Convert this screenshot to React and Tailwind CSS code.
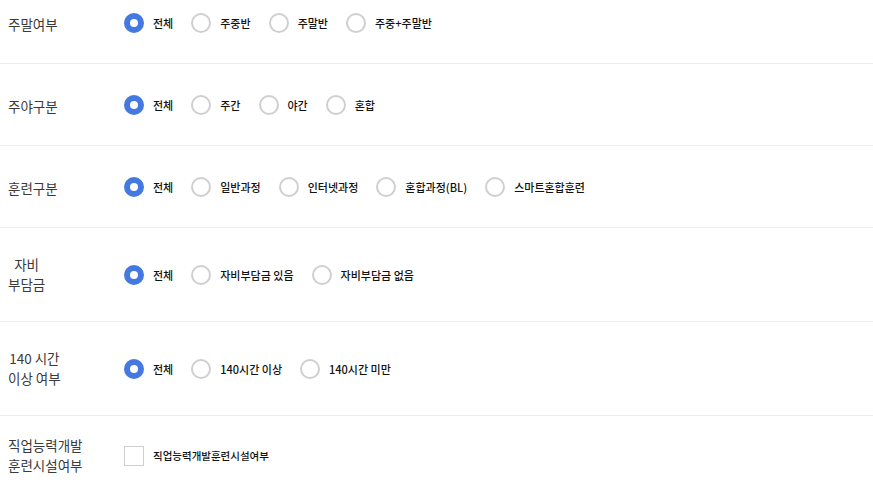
import React, { useState } from 'react';

const FONT = "font-['Noto_Sans_CJK_KR','Noto_Sans',sans-serif]";

const rows = [
    { key: 'weekend', label: ['주말여부'], options: ['전체', '주중반', '주말반', '주중+주말반'], first: true },
    { key: 'dayNight', label: ['주야구분'], options: ['전체', '주간', '야간', '혼합'] },
    { key: 'training', label: ['훈련구분'], options: ['전체', '일반과정', '인터넷과정', '혼합과정(BL)', '스마트혼합훈련'] },
    { key: 'selfPay', label: ['자비', '부담금'], options: ['전체', '자비부담금 있음', '자비부담금 없음'] },
    { key: 'hours', label: ['140 시간', '이상 여부'], options: ['전체', '140시간 이상', '140시간 미만'] },
];

const Radio = ({ checked, label, onClick }) => (
    <label className="flex items-center gap-[9px] cursor-pointer" onClick={onClick}>
        <span
            className={
                checked
                    ? 'w-5 h-5 rounded-full border-[6px] border-[#4479e1] bg-white shrink-0'
                    : 'w-5 h-5 rounded-full border-2 border-[#cfcfcf] bg-white shrink-0'
            }
        />
        <span className="text-[11px] leading-5 font-medium text-[#111] whitespace-nowrap">{label}</span>
    </label>
);

const RowLabel = ({ lines }) => (
    <div className="w-[124px] pl-2 shrink-0">
        <div className="inline-block text-center text-[13.5px] leading-[20px] text-[#3a3a3a]">
            {lines.map((l) => (
                <div key={l}>{l}</div>
            ))}
        </div>
    </div>
);

export default function App() {
    // 각 그룹의 선택값 (기본: 전체)
    const [sel, setSel] = useState({});
    const [facility, setFacility] = useState(false);

    return (
        <div className={`w-[873px] h-[489px] overflow-hidden bg-white ${FONT}`}>
            {rows.map((row) => (
                <div
                    key={row.key}
                    className={`flex items-center border-b border-[#ededed] ${row.first ? 'pt-[8px] pb-[26px]' : 'py-[26px]'}`}
                >
                    <RowLabel lines={row.label} />
                    <div className="flex items-center gap-[18px] min-h-[29px]">
                        {row.options.map((opt, i) => (
                            <Radio
                                key={opt}
                                label={opt}
                                checked={(sel[row.key] ?? 0) === i}
                                onClick={() => setSel({ ...sel, [row.key]: i })}
                            />
                        ))}
                    </div>
                </div>
            ))}

            {/* 직업능력개발훈련시설 체크박스 */}
            <div className="flex items-center pt-[19px] pb-[26px]">
                <RowLabel lines={['직업능력개발', '훈련시설여부']} />
                <label className="flex items-center gap-[9px] cursor-pointer" onClick={() => setFacility(!facility)}>
                    <span className="w-5 h-5 border border-[#cfcfcf] bg-white shrink-0" />
                    <span className="text-[10.5px] leading-5 font-medium text-[#111] whitespace-nowrap">직업능력개발훈련시설여부</span>
                </label>
            </div>
        </div>
    );
}
